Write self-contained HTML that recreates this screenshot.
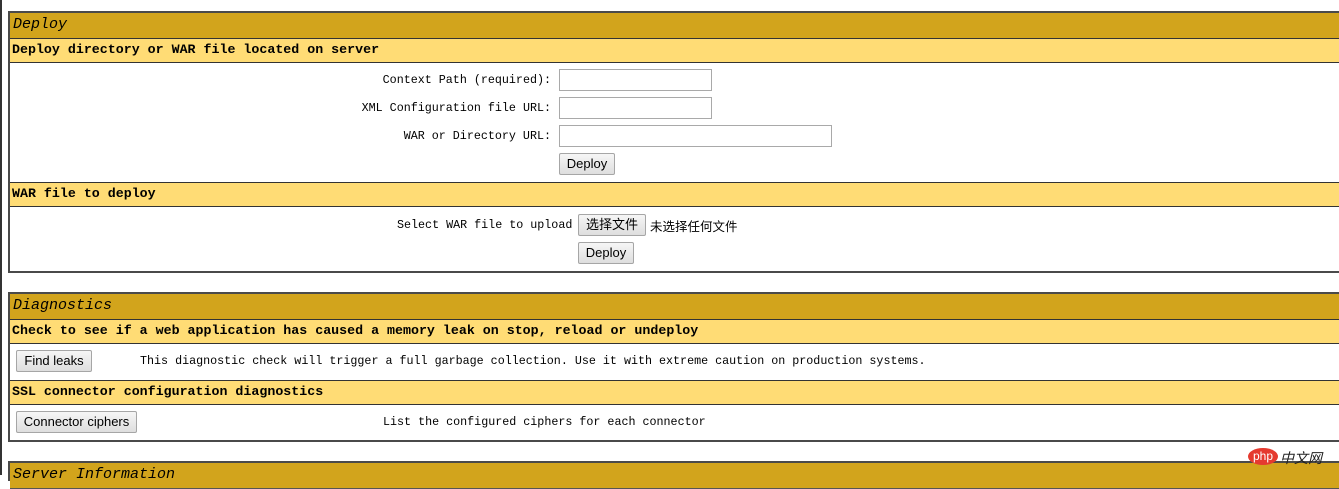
<!DOCTYPE html>
<html><head><meta charset="utf-8"><style>
body{margin:0;width:1339px;height:475px;overflow:hidden;background:#fff;position:relative;font-family:"Liberation Mono","Noto Sans CJK SC",monospace;font-size:11.7px;color:#000}
div{position:absolute;box-sizing:border-box}
.tbl{left:8px;width:1335px;border:2px solid #4a4a4a;border-right:none}
.t{left:0;right:0;background:#D2A41C;font-style:italic;font-size:15px;padding-left:3px;line-height:24px;border-bottom:1px solid #555}
.s{left:0;right:0;background:#FFDC75;font-weight:bold;font-size:13.3px;padding-left:2px;line-height:22px;border-bottom:1px solid #333;border-top:1px solid #333}
.l{text-align:right;white-space:nowrap}
.in{border:1px solid #a9a9a9;background:#fff;height:22px}
.b{border:1px solid #a6a6a6;border-radius:2px;background:linear-gradient(#f6f6f6,#dedede);font-family:"Liberation Sans","Noto Sans CJK SC",sans-serif;font-size:13px;text-align:center;line-height:20px;height:22px}
.x{white-space:nowrap}
</style></head><body>
<div style="left:0;top:0;width:2px;height:475px;background:#333"></div>

<div class="tbl" style="top:11px;height:262px">
 <div class="t" style="top:0;height:26px">Deploy</div>
 <div class="s" style="top:25px;height:25px">Deploy directory or WAR file located on server</div>
</div>
<div class="l" style="left:300px;width:251px;top:73px">Context Path (required):</div>
<div class="in" style="left:559px;top:69px;width:153px"></div>
<div class="l" style="left:300px;width:251px;top:101px">XML Configuration file URL:</div>
<div class="in" style="left:559px;top:97px;width:153px"></div>
<div class="l" style="left:300px;width:251px;top:129px">WAR or Directory URL:</div>
<div class="in" style="left:559px;top:125px;width:273px"></div>
<div class="b" style="left:559px;top:153px;width:56px">Deploy</div>
<div class="s" style="left:10px;right:0;top:182px;height:25px">WAR file to deploy</div>
<div class="x" style="left:397px;top:218px">Select WAR file to upload</div>
<div class="b" style="left:578px;top:214px;width:68px">选择文件</div>
<div class="x" style="left:650px;top:216px;font-family:'Noto Sans CJK SC',sans-serif;font-size:12.5px">未选择任何文件</div>
<div class="b" style="left:578px;top:242px;width:56px">Deploy</div>

<div class="tbl" style="top:292px;height:150px">
 <div class="t" style="top:0;height:26px">Diagnostics</div>
 <div class="s" style="top:25px;height:25px">Check to see if a web application has caused a memory leak on stop, reload or undeploy</div>
 <div class="s" style="top:86px;height:25px">SSL connector configuration diagnostics</div>
</div>
<div class="b" style="left:16px;top:350px;width:76px">Find leaks</div>
<div class="x" style="left:140px;top:354px">This diagnostic check will trigger a full garbage collection. Use it with extreme caution on production systems.</div>
<div class="b" style="left:16px;top:411px;width:121px">Connector ciphers</div>
<div class="x" style="left:383px;top:415px">List the configured ciphers for each connector</div>

<div class="tbl" style="top:461px;height:20px">
 <div class="t" style="top:0;height:26px">Server Information</div>
</div>
<div style="left:1248px;top:448px;width:30px;height:17px;border-radius:50%;background:#e53a2f;color:#fff;font-family:'Liberation Sans',sans-serif;font-size:12px;text-align:center;line-height:17px">php</div>
<div style="left:1280px;top:448px;font-family:'Noto Sans CJK SC',sans-serif;font-size:14px;font-style:italic;color:#222">中文网</div>
</body></html>
